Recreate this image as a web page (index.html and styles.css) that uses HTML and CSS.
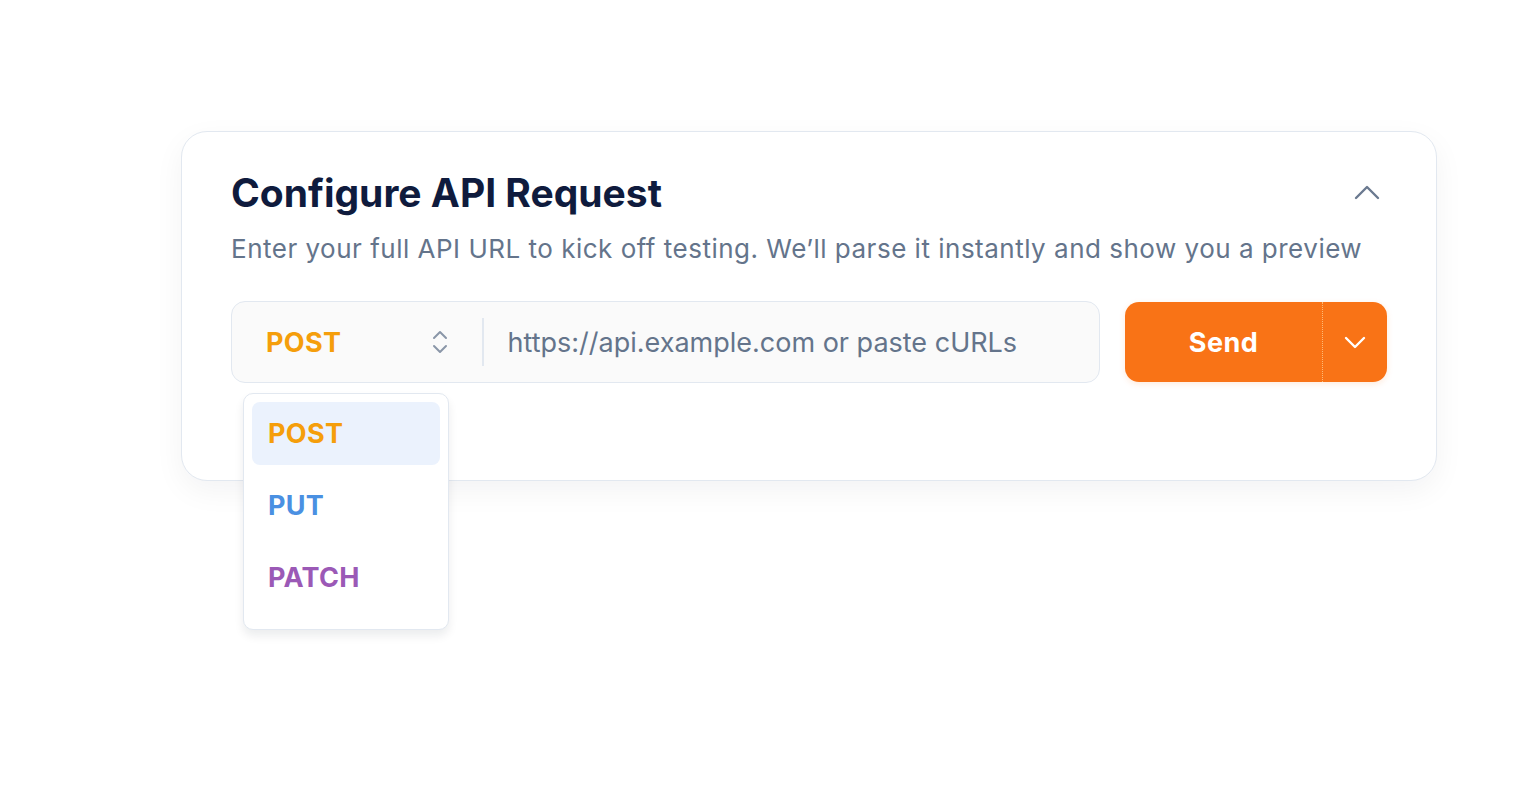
FILE: index.html
```html
<!DOCTYPE html>
<html lang="en">
<head>
    <meta charset="UTF-8">
    <meta name="viewport" content="width=device-width, initial-scale=1.0">
    <title>Configure API Request</title>
    <link rel="stylesheet" href="styles.css">
</head>
<body>
    <div class="card">
        <div class="card-head">
            <h1>Configure API Request</h1>
            <button class="collapse-btn" aria-label="Collapse">
                <svg width="26" height="16" viewBox="0 0 26 16" fill="none" stroke="currentColor" stroke-width="2.4" stroke-linecap="round" stroke-linejoin="round"><path d="M2 13L13 2l11 11"/></svg>
            </button>
        </div>
        <p class="subtitle">Enter your full API URL to kick off testing. We’ll parse it instantly and show you a preview</p>

        <div class="request-row">
            <div class="url-box">
                <div class="method-select">
                    <span class="method POST">POST</span>
                    <svg class="updown" width="20" height="28" viewBox="0 0 20 28" fill="none" stroke="currentColor" stroke-width="2" stroke-linecap="round" stroke-linejoin="round"><path d="M4 10l6-6 6 6"/><path d="M4 18l6 6 6-6"/></svg>

                    <ul class="method-menu">
                        <li class="method POST active">POST</li>
                        <li class="method PUT">PUT</li>
                        <li class="method PATCH">PATCH</li>
                    </ul>
                </div>
                <span class="divider"></span>
                <input class="url-input" type="text" placeholder="https://api.example.com or paste cURLs">
            </div>

            <div class="send-group">
                <button class="send-btn">Send</button>
                <button class="send-more" aria-label="More">
                    <svg width="24" height="14" viewBox="0 0 24 14" fill="none" stroke="currentColor" stroke-width="2.4" stroke-linecap="round" stroke-linejoin="round"><path d="M3 3l9 9 9-9"/></svg>
                </button>
            </div>
        </div>
    </div>
</body>
</html>
```

FILE: styles.css
```css
/* styles.css */

html, body {
    height: 100%;
}

body {
    margin: 0;
    padding: 131px 0 0 181px;
    box-sizing: border-box;
    font-family: Inter, "Noto Sans", sans-serif;
    background-color: #fff;
    color: #0f1b3d;
}

.card {
    width: 1156px;
    padding: 37px 49px 97px 49px;
    border: 1.5px solid #e2e8f0;
    border-radius: 26px;
    background-color: #fff;
    box-shadow: 0 10px 30px rgba(15, 23, 42, 0.05);
}

.card-head {
    display: flex;
    justify-content: space-between;
    align-items: center;
}

h1 {
    margin: 0;
    font-size: 39px;
    font-weight: 700;
    color: #0f1b3d;
    line-height: 48px;
}

.collapse-btn {
    border: none;
    background: none;
    padding: 0;
    margin-right: 7px;
    color: #6b7a90;
    cursor: pointer;
    display: flex;
}

.subtitle {
    margin: 15px 0 0;
    font-size: 26px;
    line-height: 34px;
    color: #64748b;
    letter-spacing: 0.5px;
}

.request-row {
    display: flex;
    gap: 25px;
    margin-top: 35px;
}

.url-box {
    flex: 1;
    display: flex;
    align-items: center;
    height: 80px;
    border: 1.5px solid #e2e8f0;
    border-radius: 14px;
    background-color: #fafafa;
}

.method-select {
    position: relative;
    align-self: stretch;
    display: flex;
    align-items: center;
    justify-content: space-between;
    width: 184px;
    padding: 0 32px 0 34px;
    cursor: pointer;
}

.method {
    font-size: 27px;
    font-weight: 700;
    letter-spacing: 0.3px;
}

.method.POST {
    color: #f59e0b;
}

.method.PUT {
    color: #4a90e2;
}

.method.PATCH {
    color: #9b59b6;
}

.updown {
    color: #8a96a8;
}

.divider {
    width: 1.5px;
    height: 48px;
    background-color: #e2e8f0;
}

.url-input {
    flex: 1;
    border: none;
    outline: none;
    background: transparent;
    padding: 0 24px;
    font-family: inherit;
    font-size: 27px;
    color: #0f1b3d;
}

.url-input::placeholder {
    color: #64748b;
}

.send-group {
    display: flex;
    height: 80px;
    margin-top: 1px;
    border-radius: 14px;
    overflow: hidden;
    box-shadow: 0 2px 6px rgba(249, 115, 22, 0.15);
}

.send-btn {
    width: 197px;
    border: none;
    background-color: #f97316;
    color: #fff;
    font-family: inherit;
    font-size: 27px;
    font-weight: 700;
    letter-spacing: 0.5px;
    cursor: pointer;
}

.send-more {
    width: 65px;
    border: none;
    border-left: 1px dotted #fdba74;
    background-color: #f97316;
    color: #fff;
    display: flex;
    align-items: center;
    justify-content: center;
    cursor: pointer;
}

.method-menu {
    position: absolute;
    top: calc(100% + 11px);
    left: 11px;
    width: 188px;
    margin: 0;
    padding: 8px 8px 20px;
    list-style: none;
    background-color: #fff;
    border: 1.5px solid #e2e8f0;
    border-radius: 10px;
    box-shadow: 0 6px 10px rgba(15, 23, 42, 0.08);
    z-index: 10;
}

.method-menu li {
    height: 63px;
    margin-bottom: 9px;
    padding: 0 16px;
    display: flex;
    align-items: center;
    border-radius: 8px;
}

.method-menu li:last-child {
    margin-bottom: 0;
}

.method-menu li.active {
    background-color: #ebf2fd;
}
```
